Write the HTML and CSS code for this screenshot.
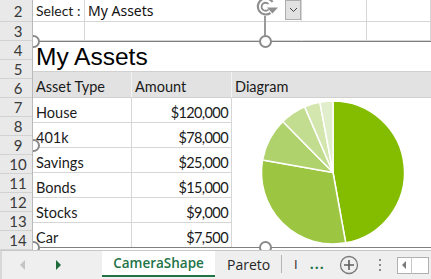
FILE: index.html
```html
<!DOCTYPE html>
<html lang="en">
<head>
    <meta charset="UTF-8">
    <title>CameraShape</title>
    <link rel="stylesheet" href="styles.css">
</head>
<body>
    <div class="sheet">
        <div class="row-heads">
            <div class="rh rh-2">2</div>
            <div class="rh">3</div>
            <div class="rh">4</div>
            <div class="rh">5</div>
            <div class="rh">6</div>
            <div class="rh">7</div>
            <div class="rh">8</div>
            <div class="rh">9</div>
            <div class="rh">10</div>
            <div class="rh">11</div>
            <div class="rh">12</div>
            <div class="rh">13</div>
            <div class="rh">14</div>
        </div>

        <div class="cells">
            <div class="row row-2">
                <div class="cell c-a">Select :</div>
                <div class="cell c-b combo">
                    <span class="combo-text">My Assets</span>
                    <span class="combo-btn">
                        <svg width="9" height="6" viewBox="0 0 9 6"><path d="M1 1 L4.5 4.5 L8 1" fill="none" stroke="#444" stroke-width="1"/></svg>
                    </span>
                </div>
                <div class="cell c-c"></div>
                <div class="cell c-d"></div>
            </div>
            <div class="row row-3">
                <div class="cell c-a"></div>
                <div class="cell c-b"></div>
                <div class="cell c-c"></div>
                <div class="cell c-d"></div>
            </div>

            <!-- linked picture of the assets table -->
            <div class="picture">
                <div class="title">My Assets</div>
                <div class="th">Asset Type</div>
                <div class="th">Amount</div>
                <div class="th th-last">Diagram</div>

                <div class="td">House</div><div class="td num">$120,000</div>
                <div class="chart">
                    <svg width="199" height="150" viewBox="0 0 199 150">
                        <g stroke="#fff" stroke-width="1.5" stroke-linejoin="round">
                            <path d="M101 74.5 L101 3 A71.5 71.5 0 0 1 113.74 144.86 Z" fill="#84bc00"/>
                            <path d="M101 74.5 L113.74 144.86 A71.5 71.5 0 0 1 30.6 61.98 Z" fill="#9cc641"/>
                            <path d="M101 74.5 L30.6 61.98 A71.5 71.5 0 0 1 50.81 23.58 Z" fill="#b0d26d"/>
                            <path d="M101 74.5 L50.81 23.58 A71.5 71.5 0 0 1 72.67 8.85 Z" fill="#c2dc90"/>
                            <path d="M101 74.5 L72.67 8.85 A71.5 71.5 0 0 1 87.84 4.22 Z" fill="#d2e6ae"/>
                            <path d="M101 74.5 L87.84 4.22 A71.5 71.5 0 0 1 101 3 Z" fill="#e1eecb"/>
                        </g>
                    </svg>
                </div>
                <div class="td">401k</div><div class="td num">$78,000</div>
                <div class="td">Savings</div><div class="td num">$25,000</div>
                <div class="td">Bonds</div><div class="td num">$15,000</div>
                <div class="td">Stocks</div><div class="td num">$9,000</div>
                <div class="td td-end">Car</div><div class="td num td-end">$7,500</div>
            </div>

            <!-- selection handles -->
            <svg class="rotate" width="26" height="20" viewBox="0 0 26 20">
                <path d="M18.5 4 A8 8 0 1 0 16.5 15" fill="none" stroke="#8f8f8f" stroke-width="2.2"/>
                <path d="M14.5 6 A4 4 0 1 0 14.5 11.5" fill="none" stroke="#8f8f8f" stroke-width="1.8"/>
                <path d="M13 9.5 L24 9.5 L18.5 15.5 Z" fill="#8f8f8f"/>
            </svg>
            <div class="stem"></div>
            <div class="handle h-tm"></div>
            <div class="handle h-tl"></div>
            <div class="handle h-ml"></div>
            <div class="handle h-bl"></div>
            <div class="handle h-bm"></div>
        </div>
    </div>

    <div class="tabbar">
        <div class="tab-nav">
            <span class="arrow arrow-left"></span>
            <span class="arrow arrow-right"></span>
        </div>
        <div class="tab active">CameraShape</div>
        <div class="tab tab-pareto">Pareto</div>
        <div class="tab-cut">I</div>
        <div class="more">...</div>
        <div class="add">
            <svg width="20" height="20" viewBox="0 0 20 20">
                <circle cx="10" cy="10" r="8.5" fill="none" stroke="#7a7a7a" stroke-width="1.3"/>
                <path d="M10 5 V15 M5 10 H15" stroke="#5e5e5e" stroke-width="1.6"/>
            </svg>
        </div>
        <div class="vdots"><span></span><span></span><span></span></div>
        <div class="hscroll">
            <span class="hs-btn"><span class="hs-arrow"></span></span>
            <span class="hs-track"></span>
        </div>
    </div>
</body>
</html>
```

FILE: styles.css
```css
body {
    margin: 0;
    width: 431px;
    height: 279px;
    overflow: hidden;
    background: #ffffff;
    font-family: 'Lato', 'Liberation Sans', sans-serif;
    font-size: 14.5px;
    color: #1a1a1a;
    white-space: nowrap;
}
.sheet {
    display: flex;
    height: 250px;
}
.row-heads {
    width: 32px;
    flex: none;
    display: flex;
    flex-direction: column;
    background: #e9e9e9;
    border-right: 1px solid #b9b9b9;
    position: relative;
    z-index: 2;
}
.rh {
    height: 19px;
    box-sizing: border-box;
    border-bottom: 1px solid #d2d2d2;
    display: flex;
    align-items: center;
    justify-content: center;
    padding-left: 4px;
    color: #3a3a3a;
    font-size: 15px;
}
.rh-2 {
    height: 22px;
}
.cells {
    flex: 1;
    position: relative;
    overflow: hidden;
}
.row {
    display: flex;
}
.row-2 {
    height: 22px;
}
.row-3 {
    height: 19px;
}
.cell {
    box-sizing: border-box;
    border-right: 1px solid #d6d6d6;
    border-bottom: 1px solid #d6d6d6;
    height: 100%;
    display: flex;
    align-items: flex-end;
    padding: 0 3px 2px;
}
.c-a {
    width: 52px;
    padding-right: 0;
    font-size: 14px;
}
.c-b {
    width: 217px;
}
.c-c {
    width: 65px;
}
.c-d {
    flex: 1;
}
.combo {
    padding-right: 0;
    align-items: stretch;
    padding-bottom: 0;
}
.combo-text {
    flex: 1;
    font-family: 'Noto Sans', sans-serif;
    font-size: 14px;
    line-height: 21px;
    color: #111;
}
.combo-btn {
    width: 16px;
    height: 20px;
    box-sizing: border-box;
    background: #e1e1e1;
    border: 1px solid #adadad;
    display: flex;
    align-items: center;
    justify-content: center;
}
.row-3 .c-b {
    border-right-color: transparent;
}

/* camera picture */
.picture {
    display: grid;
    grid-template-columns: 99px 100px 1fr;
    grid-template-rows: 30px 26px 25px 25px 25px 25px 25px 24px;
    border-top: 1px solid #7f7f7f;
    border-bottom: 1px solid #7f7f7f;
}
.title {
    grid-column: 1 / 4;
    box-sizing: border-box;
    border-bottom: 1px solid #d0d0d0;
    font-family: 'Liberation Sans', sans-serif;
    font-size: 24.5px;
    line-height: 29px;
    padding-left: 3px;
    color: #000;
}
.th {
    background: #e2e2e2;
    box-sizing: border-box;
    border-right: 1px solid #f3f3f3;
    border-bottom: 1px solid #d0d0d0;
    display: flex;
    align-items: flex-end;
    padding: 0 3px 2px;
}
.th-last {
    border-right: none;
}
.td {
    box-sizing: border-box;
    border-right: 1px solid #d6d6d6;
    border-bottom: 1px solid #d6d6d6;
    display: flex;
    align-items: flex-end;
    padding: 0 3px 1px;
}
.td.num {
    justify-content: flex-end;
    letter-spacing: -0.6px;
}
.td-end {
    border-bottom: none;
}
.chart {
    grid-column: 3;
    grid-row: 3 / 9;
    background: #fff;
}
.chart svg {
    display: block;
}

/* selection handles */
.rotate {
    position: absolute;
    left: 221px;
    top: -2px;
}
.stem {
    position: absolute;
    left: 231px;
    top: 16px;
    width: 2px;
    height: 20px;
    background: #9a9a9a;
}
.handle {
    position: absolute;
    width: 9px;
    height: 9px;
    border: 2px solid #8a8a8a;
    border-radius: 50%;
    background: #fff;
}
.h-tm {
    left: 226px;
    top: 35px;
}
.h-bm {
    left: 226px;
    top: 241px;
}
.h-tl {
    left: -6px;
    top: 35px;
}
.h-ml {
    left: -6px;
    top: 139px;
}
.h-bl {
    left: -6px;
    top: 241px;
}

/* sheet tabs */
.tabbar {
    height: 29px;
    box-sizing: border-box;
    background: #efefef;
    border-top: 1px solid #c8c8c8;
    border-left: 2px solid #d8d8d8;
    display: flex;
    align-items: stretch;
    font-family: 'Open Sans', sans-serif;
    font-size: 14px;
    color: #262626;
}
.tab-nav {
    width: 100px;
    display: flex;
    align-items: center;
}
.arrow {
    width: 0;
    height: 0;
    border-top: 5px solid transparent;
    border-bottom: 5px solid transparent;
}
.arrow-left {
    margin-left: 18px;
    border-right: 5px solid #c4c4c4;
}
.arrow-right {
    margin-left: 31px;
    border-left: 5px solid #1e6b3c;
}
.tab {
    display: flex;
    align-items: center;
    height: 26px;
}
.tab.active {
    width: 113px;
    box-sizing: border-box;
    justify-content: center;
    background: #fff;
    color: #217346;
    font-weight: 600;
    font-size: 13.5px;
    border-bottom: 2px solid #217346;
}
.tab-pareto {
    width: 67px;
    box-sizing: border-box;
    padding-left: 12px;
    border-right: 1px solid #b5b5b5;
    height: 18px;
    margin-top: 4px;
}
.tab-cut {
    display: flex;
    align-items: center;
    padding: 0 12px 2px 12px;
    font-size: 13px;
}
.more {
    display: flex;
    align-items: center;
    color: #217346;
    font-weight: 700;
    letter-spacing: 1px;
    padding-bottom: 4px;
}
.add {
    display: flex;
    align-items: center;
    margin-left: 14px;
}
.vdots {
    display: flex;
    flex-direction: column;
    justify-content: center;
    gap: 3px;
    margin-left: 20px;
}
.vdots span {
    width: 2px;
    height: 2px;
    background: #8a8a8a;
}
.hscroll {
    margin-left: 16px;
    display: flex;
    align-items: center;
}
.hs-btn {
    width: 15px;
    height: 17px;
    box-sizing: border-box;
    border: 1px solid #b0b0b0;
    border-right: 1px solid #c8c8c8;
    background: #fff;
    display: flex;
    align-items: center;
    justify-content: center;
}
.hs-arrow {
    width: 0;
    height: 0;
    border-top: 4px solid transparent;
    border-bottom: 4px solid transparent;
    border-right: 4px solid #7a7a7a;
}
.hs-track {
    width: 17px;
    height: 17px;
    box-sizing: border-box;
    border: 1px solid #b0b0b0;
    border-left: none;
    background: #fff;
}
```
